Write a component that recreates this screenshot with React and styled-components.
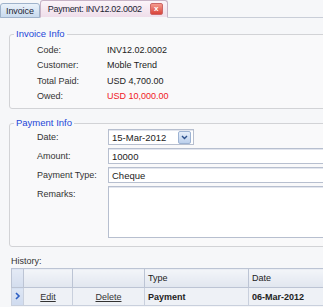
import styled, { createGlobalStyle } from 'styled-components'

const Global = createGlobalStyle`
  html, body {
    margin: 0;
    padding: 0;
    background: #f6f7f9;
    overflow: hidden;
  }
  body {
    font-family: "Liberation Sans", Arial, sans-serif;
    font-size: 9px;
    color: #222;
  }
`;

const Page = styled.div`
  width: 323px;
  height: 307px;
  overflow: hidden;
`;

const TabBar = styled.div`
  display: flex;
  align-items: flex-end;
  height: 18px;
  border-bottom: 1px solid #c9ced8;
  box-sizing: border-box;
`;

const Tab = styled.div`
  display: flex;
  align-items: center;
  gap: 8px;
  box-sizing: border-box;
  height: ${(p) => (p.active ? '18px' : '15px')};
  padding: ${(p) => (p.active ? '0 4px 0 7px' : '0 5px')};
  margin-bottom: -1px;
  border: 1px solid ${(p) => (p.active ? '#c7b3c6' : '#9fb3cb')};
  border-bottom: ${(p) => (p.active ? '1px solid #f6f7f9' : '1px solid #9fb3cb')};
  border-radius: 3px 3px 0 0;
  background: ${(p) =>
    p.active
      ? 'linear-gradient(#fbf4f9, #efdeea)'
      : 'linear-gradient(#eaf2fa, #c8daee)'};
  color: #1c2535;
  font-size: 9px;
  letter-spacing: ${(p) => (p.active ? '-0.3px' : '-0.1px')};
  white-space: nowrap;
`;

const CloseBox = styled.span`
  display: flex;
  align-items: center;
  justify-content: center;
  width: 13px;
  height: 12px;
  border-radius: 2px;
  border: 1px solid #c66;
  box-sizing: border-box;
  background: linear-gradient(#f59a8e, #d9433a);
  color: #fff;
  font-size: 8px;
  font-weight: bold;
  letter-spacing: 0;
  line-height: 1;
`;

const Content = styled.div`
  padding: 10px 0 0 9px;
`;

const Fieldset = styled.fieldset`
  margin: 0 0 8px 0;
  padding: ${(p) => p.pad};
  width: 380px;
  border: 1px solid #d2d3d6;
  border-radius: 3px;
  background: #f9f9fa;
  box-sizing: border-box;
`;

const Legend = styled.legend`
  margin: 0;
  padding: 0 2px;
  color: #2446d8;
  font-size: 9.5px;
  line-height: 12px;
`;

const InfoGrid = styled.div`
  display: grid;
  grid-template-columns: 70px auto;
  grid-auto-rows: 15.5px;
  align-items: center;
  margin-left: 23px;
`;

const Label = styled.span`
  color: #333;
`;

const Value = styled.span`
  color: ${(p) => (p.red ? '#f01824' : '#222')};
`;

const FormGrid = styled.div`
  display: grid;
  grid-template-columns: 71px auto;
  row-gap: 3px;
  align-items: start;
  margin-left: 23px;
`;

const FieldLabel = styled.span`
  line-height: 16px;
  color: #333;
`;

const Box = styled.div`
  display: flex;
  align-items: center;
  box-sizing: border-box;
  width: ${(p) => p.w || '280px'};
  height: ${(p) => p.h || '16px'};
  padding: 0 2px 0 3px;
  border: 1px solid #b7bfcf;
  box-shadow: inset 0 1px 0 #e3e6ee;
  background: #fff;
  color: #222;
  font-size: 9.5px;
`;

const BoxText = styled.span`
  flex: 1;
`;

const DropBtn = styled.span`
  display: flex;
  align-items: center;
  justify-content: center;
  width: 11px;
  height: 11px;
  border: 1px solid #9db3d3;
  border-radius: 2px;
  background: linear-gradient(#e6eefa, #bcd0ec);
`;

const HistoryLabel = styled.div`
  padding: 0 0 1px 2px;
  line-height: 12px;
  color: #333;
`;

const Grid = styled.table`
  margin-left: 2px;
  border-collapse: collapse;
  table-layout: fixed;
  width: 360px;
`;

const HeadCell = styled.th`
  height: 18px;
  padding: 0 0 0 3px;
  border: 1px solid #bcc4d4;
  background: ${(p) => (p.ind ? 'linear-gradient(#e4eaf5, #d3ddee)' : 'linear-gradient(#f3f5f9, #e1e6ef)')};
  text-align: left;
  font-weight: normal;
  color: #222;
`;

const Cell = styled.td`
  height: 17px;
  padding: 0 0 0 ${(p) => (p.center ? '0' : '3px')};
  border: 1px solid #c9d0dd;
  background: ${(p) => (p.ind ? 'linear-gradient(#dde6f4, #cfdbef)' : '#eef1f6')};
  text-align: ${(p) => (p.center ? 'center' : 'left')};
  font-weight: ${(p) => (p.bold ? 'bold' : 'normal')};
  color: #222;
`;

const Link = styled.span`
  text-decoration: underline;
  color: #333;
`;

const Chevron = () => (
  <svg width="6" height="8" viewBox="0 0 6 8">
    <path d="M1 1 L4 4 L1 7" fill="none" stroke="#2d5fc4" strokeWidth="1.6" />
  </svg>
)

const DownArrow = () => (
  <svg width="7" height="5" viewBox="0 0 7 5">
    <path d="M1 1 L3.5 3.5 L6 1" fill="none" stroke="#2b4f8a" strokeWidth="1.4" />
  </svg>
)

const invoice = [
  ['Code:', 'INV12.02.0002'],
  ['Customer:', 'Moble Trend'],
  ['Total Paid:', 'USD 4,700.00'],
  ['Owed:', 'USD 10,000.00', true],
]

const App = () => {
  return (
    <Page>
      <Global />
      <TabBar>
        <Tab>Invoice</Tab>
        <Tab active>
          Payment: INV12.02.0002
          <CloseBox>x</CloseBox>
        </Tab>
      </TabBar>
      <Content>
        <Fieldset pad="2px 0 4px 4px">
          <Legend>Invoice Info</Legend>
          <InfoGrid>
            {invoice.map(([label, value, red]) => [
              <Label key={label}>{label}</Label>,
              <Value key={label + 'v'} red={red}>{value}</Value>,
            ])}
          </InfoGrid>
        </Fieldset>
        <Fieldset pad="0 0 8px 4px">
          <Legend>Payment Info</Legend>
          <FormGrid>
            <FieldLabel>Date:</FieldLabel>
            <Box w="86px">
              <BoxText>15-Mar-2012</BoxText>
              <DropBtn><DownArrow /></DropBtn>
            </Box>
            <FieldLabel>Amount:</FieldLabel>
            <Box>10000</Box>
            <FieldLabel>Payment Type:</FieldLabel>
            <Box>Cheque</Box>
            <FieldLabel>Remarks:</FieldLabel>
            <Box h="52px" />
          </FormGrid>
        </Fieldset>
        <HistoryLabel>History:</HistoryLabel>
        <Grid>
          <colgroup>
            <col style={{ width: 12 }} />
            <col style={{ width: 49 }} />
            <col style={{ width: 72 }} />
            <col style={{ width: 104 }} />
            <col />
          </colgroup>
          <thead>
            <tr>
              <HeadCell ind />
              <HeadCell />
              <HeadCell />
              <HeadCell>Type</HeadCell>
              <HeadCell>Date</HeadCell>
            </tr>
          </thead>
          <tbody>
            <tr>
              <Cell ind center><Chevron /></Cell>
              <Cell center><Link>Edit</Link></Cell>
              <Cell center><Link>Delete</Link></Cell>
              <Cell bold>Payment</Cell>
              <Cell bold>06-Mar-2012</Cell>
            </tr>
          </tbody>
        </Grid>
      </Content>
    </Page>
  )
}

export default App
